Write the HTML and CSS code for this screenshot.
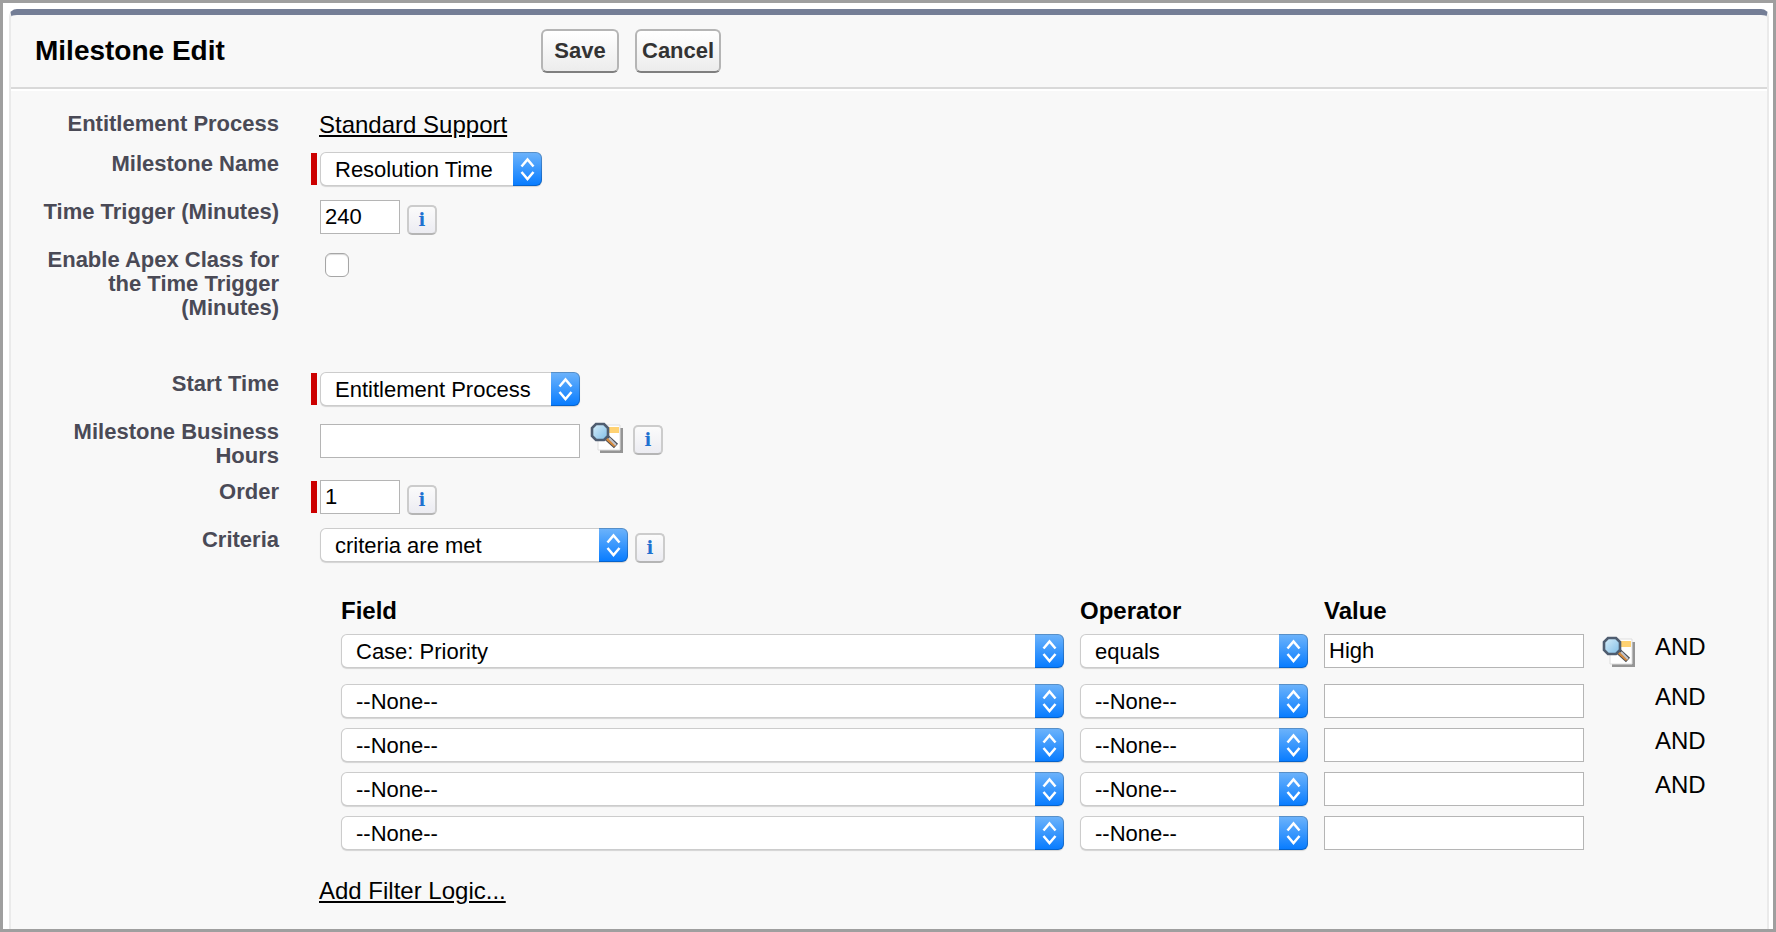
FILE: index.html
```html
<!DOCTYPE html>
<html lang="en">
<head>
    <meta charset="UTF-8">
    <meta name="viewport" content="width=device-width, initial-scale=1.0">
    <title>Milestone Edit</title>
    <link rel="stylesheet" href="styles.css">
</head>
<body>

<!-- Lookup icon, reused by each lookup link -->
<svg class="sprite" aria-hidden="true">
    <defs>
        <linearGradient id="glass" x1="0" y1="0" x2="1" y2="1">
            <stop offset="0" stop-color="#d9effa"/>
            <stop offset="1" stop-color="#7fbde6"/>
        </linearGradient>
    </defs>
    <symbol id="lookup" viewBox="0 0 34 32">
        <path d="M10 6h23v25H10z" fill="#959595"/>
        <path d="M8 3h22v25H8z" fill="#fff" stroke="#dedede"/>
        <path d="M18 5h11v6H18z" fill="#ffd272"/>
        <path d="M15 14l11 10" stroke="#454a52" stroke-width="6"/>
        <path d="M16 16l9 8" stroke="#d58a3c" stroke-width="3"/>
        <path d="M19 16l7 7" stroke="#c3c5cb" stroke-width="2"/>
        <path d="M6 2h8l4 4v8l-4 4H6l-4-4V6z" fill="url(#glass)" stroke="#4f5d70" stroke-width="2.600"/>
    </symbol>
</svg>

<form class="panel">
    <div class="header">
        <h1>Milestone Edit</h1>
        <div class="buttons">
            <button type="submit" class="btn">Save</button>
            <button type="button" class="btn">Cancel</button>
        </div>
    </div>

    <div class="fields">
        <div class="row">
            <span class="label">Entitlement Process</span>
            <div class="text"><a href="#">Standard Support</a></div>
        </div>
        <div class="row">
            <label class="label" for="milestone-name">Milestone Name</label>
            <div class="control required">
                <select id="milestone-name" class="name-select">
                    <option>Resolution Time</option>
                </select>
            </div>
        </div>
        <div class="row">
            <label class="label" for="time-trigger">Time Trigger (Minutes)</label>
            <div class="control">
                <input type="text" id="time-trigger" class="short" value="240">
                <button type="button" class="info">i</button>
            </div>
        </div>
        <div class="row section-end">
            <label class="label" for="apex-class">Enable Apex Class for the Time Trigger (Minutes)</label>
            <div class="control">
                <input type="checkbox" id="apex-class">
            </div>
        </div>
        <div class="row">
            <label class="label" for="start-time">Start Time</label>
            <div class="control required">
                <select id="start-time" class="start-select">
                    <option>Entitlement Process</option>
                </select>
            </div>
        </div>
        <div class="row">
            <label class="label" for="business-hours">Milestone Business Hours</label>
            <div class="control with-lookup">
                <input type="text" id="business-hours" class="long">
                <a href="#" class="lookup" aria-label="Business hours lookup"><svg><use href="#lookup"/></svg></a>
                <button type="button" class="info">i</button>
            </div>
        </div>
        <div class="row">
            <label class="label" for="order">Order</label>
            <div class="control required">
                <input type="text" id="order" class="short" value="1">
                <button type="button" class="info">i</button>
            </div>
        </div>
        <div class="row">
            <label class="label" for="criteria">Criteria</label>
            <div class="control">
                <select id="criteria" class="criteria-select">
                    <option>criteria are met</option>
                </select>
                <button type="button" class="info">i</button>
            </div>
        </div>
    </div>

    <div class="filters">
        <table>
            <thead>
                <tr>
                    <th class="col-field">Field</th>
                    <th class="col-operator">Operator</th>
                    <th class="col-value">Value</th>
                    <td class="col-lookup"></td>
                    <td class="col-and"></td>
                </tr>
            </thead>
            <tbody>
                <tr class="first">
                    <td><select aria-label="Field 1"><option>Case: Priority</option></select></td>
                    <td><select aria-label="Operator 1"><option>equals</option></select></td>
                    <td><input type="text" aria-label="Value 1" value="High"></td>
                    <td><a href="#" class="lookup" aria-label="Value lookup"><svg><use href="#lookup"/></svg></a></td>
                    <td class="and">AND</td>
                </tr>
                <tr>
                    <td><select aria-label="Field 2"><option>--None--</option></select></td>
                    <td><select aria-label="Operator 2"><option>--None--</option></select></td>
                    <td><input type="text" aria-label="Value 2"></td>
                    <td></td>
                    <td class="and">AND</td>
                </tr>
                <tr>
                    <td><select aria-label="Field 3"><option>--None--</option></select></td>
                    <td><select aria-label="Operator 3"><option>--None--</option></select></td>
                    <td><input type="text" aria-label="Value 3"></td>
                    <td></td>
                    <td class="and">AND</td>
                </tr>
                <tr>
                    <td><select aria-label="Field 4"><option>--None--</option></select></td>
                    <td><select aria-label="Operator 4"><option>--None--</option></select></td>
                    <td><input type="text" aria-label="Value 4"></td>
                    <td></td>
                    <td class="and">AND</td>
                </tr>
                <tr>
                    <td><select aria-label="Field 5"><option>--None--</option></select></td>
                    <td><select aria-label="Operator 5"><option>--None--</option></select></td>
                    <td><input type="text" aria-label="Value 5"></td>
                    <td></td>
                    <td></td>
                </tr>
            </tbody>
        </table>
        <div class="filter-logic"><a href="#">Add Filter Logic...</a></div>
    </div>
</form>

</body>
</html>
```
FILE: styles.css
```css
* {
    box-sizing: border-box;
}
body {
    margin: 0;
    min-height: 100vh;
    display: flex;
    padding: 6px 4px 0 6px;
    border: 3px solid #9f9f9f;
    background: #ffffff;
    color: #000000;
    font-family: "Liberation Sans", Arial, sans-serif;
    font-size: 24px;
    line-height: 28px;
}
a {
    color: #000000;
}
.sprite {
    position: absolute;
    width: 0;
    height: 0;
}
.panel {
    flex: 1;
    background: #f8f8f8;
    border: 2px solid #eaeaea;
    border-top: 6px solid #747e96;
    border-bottom: none;
    border-radius: 8px 8px 0 0;
}

/* Title bar */
.header {
    display: grid;
    grid-template-columns: 506px 1fr;
    align-items: center;
    height: 74px;
    padding-left: 24px;
    border-bottom: 2px solid #d9d9d9;
    box-shadow: 0 2px 0 #ffffff;
}
.header h1 {
    margin: 0;
    font-size: 28px;
}
.buttons {
    display: flex;
    gap: 16px;
}
.btn {
    min-width: 78px;
    height: 44px;
    padding: 0 5px;
    border: 2px solid #b5b5b5;
    border-bottom-color: #7f7f7f;
    border-radius: 6px;
    background: linear-gradient(#ffffff, #ececec);
    color: #333333;
    font: bold 22px "Liberation Sans", Arial, sans-serif;
    cursor: pointer;
}

/* Field rows */
.fields {
    padding-top: 22px;
}
.row {
    display: grid;
    grid-template-columns: 268px 1fr;
    column-gap: 40px;
    margin-bottom: 12px;
}
.section-end {
    margin-bottom: 51px;
}
.label {
    padding: 1px 0 0 30px;
    margin-bottom: -1px;
    color: #4a4a56;
    font-size: 22px;
    font-weight: bold;
    line-height: 24px;
    text-align: right;
}
.section-end .label {
    margin-bottom: 0;
}
.control {
    position: relative;
    display: flex;
    align-items: flex-start;
    min-height: 36px;
    padding: 1px 0 0 1px;
}
.required::before {
    content: "";
    position: absolute;
    left: -8px;
    top: 2px;
    width: 6px;
    height: 32px;
    background: #cc0000;
}

select, input[type="text"] {
    display: block;
    width: 100%;
    height: 34px;
    margin: 0;
    color: #000000;
    font: 22px "Liberation Sans", Arial, sans-serif;
}
input[type="text"] {
    padding: 0 4px;
    border: 1px solid #b5b5b5;
    background: #ffffff;
}
select {
    appearance: none;
    padding: 0 30px 0 14px;
    border: 1px solid rgba(0, 0, 0, 0.2);
    border-radius: 6px;
    background-color: #ffffff;
    background-image: url("data:image/svg+xml,%3Csvg xmlns='http://www.w3.org/2000/svg' width='29' height='34' fill='none' stroke='white' stroke-width='2.500'%3E%3Cpath d='M8.500 14.500l6-7 6 7M8.500 20l6 7 6-7'/%3E%3C/svg%3E"), linear-gradient(#6eb4fb, #067bff);
    background-origin: border-box;
    background-position: right top;
    background-repeat: no-repeat;
    background-size: 29px 34px;
    box-shadow: 0 1px 1px rgba(0, 0, 0, 0.15);
}
input[type="checkbox"] {
    appearance: none;
    width: 24px;
    height: 24px;
    margin: 5px;
    border: 1px solid #a6a6a6;
    border-radius: 6px;
    background: #ffffff;
    box-shadow: inset 0 1px 1px rgba(0, 0, 0, 0.15);
}
.control .short {
    width: 80px;
}
.control .long {
    width: 260px;
    margin-top: 4px;
}
.name-select {
    width: 222px;
}
.start-select {
    width: 260px;
}
.criteria-select {
    width: 308px;
}

.info {
    width: 30px;
    height: 30px;
    margin: 5px 0 0 7px;
    padding: 0;
    border: 2px solid #cccccc;
    border-bottom-color: #b5b5b5;
    border-radius: 5px;
    background: linear-gradient(#fbfbfb, #ececf2);
    color: #1f71d0;
    font: bold 18px "DejaVu Serif", serif;
    line-height: 26px;
    cursor: pointer;
}
.lookup, .lookup svg {
    display: block;
    width: 34px;
    height: 32px;
}
.with-lookup .lookup {
    margin: 2px 2px 0 10px;
}

/* Filter criteria */
.filters {
    padding: 22px 61px 20px 308px;
}
table {
    width: 100%;
    padding-left: 22px;
    border-spacing: 0;
    table-layout: fixed;
}
th, td {
    padding: 0;
    text-align: left;
    vertical-align: top;
}
th {
    height: 37px;
}
.col-operator {
    width: 244px;
}
.col-value {
    width: 278px;
}
.col-lookup {
    width: 53px;
}
.col-and {
    width: 51px;
}
tbody td {
    height: 44px;
    padding-right: 16px;
}
tbody td:nth-child(3) {
    padding-right: 18px;
}
tbody td:nth-child(n+4) {
    padding-right: 0;
}
.first td {
    height: 50px;
}
td .lookup {
    margin-top: 2px;
}
.and {
    line-height: 26px;
}
.filter-logic {
    margin-top: 17px;
}
```
